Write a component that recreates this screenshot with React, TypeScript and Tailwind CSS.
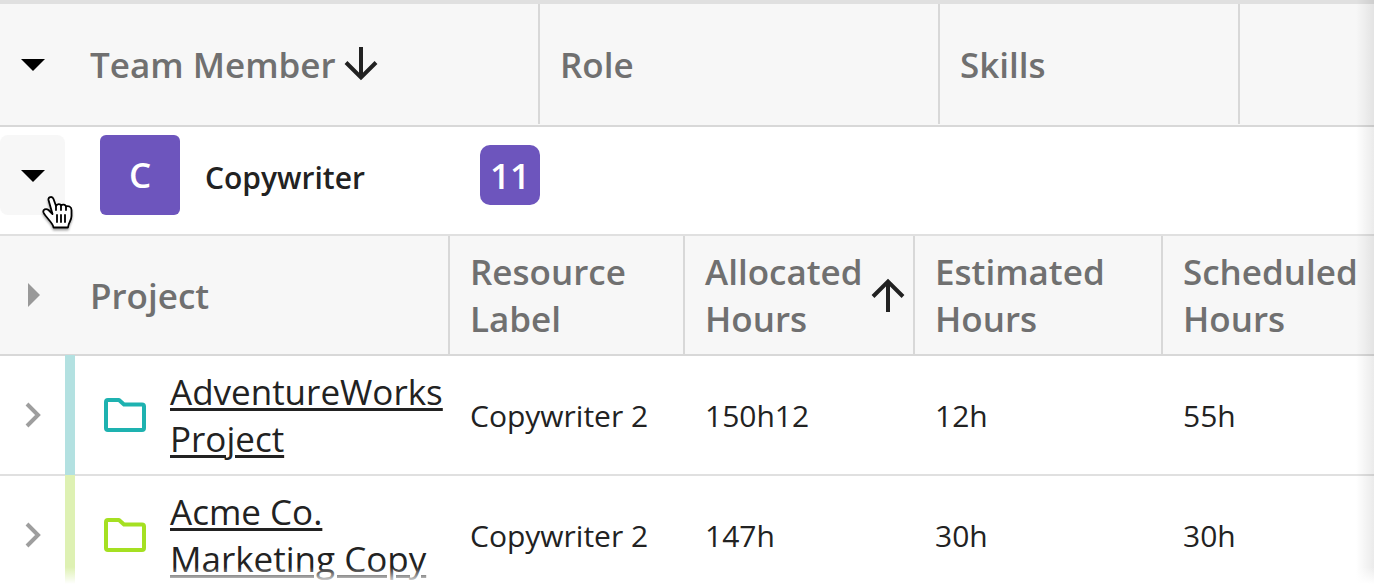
const MEMBER_COLUMNS = [
  { label: "Team Member", sorted: true },
  { label: "Role" },
  { label: "Skills" },
];

const PROJECT_COLUMNS = [
  { label: "Resource Label" },
  { label: "Allocated Hours", sorted: true },
  { label: "Estimated Hours" },
  { label: "Scheduled Hours" },
];

const PROJECTS = [
  {
    name: "AdventureWorks Project",
    stripe: "bg-[#b3e1e1]",
    icon: "text-[#1eb2b0]",
    values: ["Copywriter 2", "150h12", "12h", "55h"],
  },
  {
    name: "Acme Co. Marketing Copy",
    stripe: "bg-[#def1b3]",
    icon: "text-[#a5e022]",
    values: ["Copywriter 2", "147h", "30h", "30h"],
  },
];

function SortArrow({ up = false }: { up?: boolean }) {
  return (
    <svg viewBox="0 0 34 34" className="h-[34px] w-[34px] flex-shrink-0" fill="none" stroke="#222" strokeWidth="4">
      {up ? (
        <path d="M17 34V4M2 18.500L17 3.500L32 18.500" />
      ) : (
        <path d="M17 0V30M2 15.500L17 30.500L32 15.500" />
      )}
    </svg>
  );
}

function CaretDown() {
  return (
    <svg viewBox="0 0 24 12" className="h-3 w-6" fill="#000">
      <path d="M0 0H24L12 12Z" />
    </svg>
  );
}

function CaretRight() {
  return (
    <svg viewBox="0 0 12 24" className="h-6 w-3" fill="#999">
      <path d="M0 0L12 12L0 24Z" />
    </svg>
  );
}

function Chevron() {
  return (
    <svg viewBox="0 0 16 26" className="h-[26px] w-4" fill="none" stroke="#9e9e9e" strokeWidth="4">
      <path d="M2 2L13 13L2 24" />
    </svg>
  );
}

function Folder() {
  return (
    <svg viewBox="0 0 42 34" className="h-[34px] w-[42px]" fill="none" stroke="currentColor" strokeWidth="4" strokeLinejoin="round">
      <path d="M4 2H15L20 6.500H38Q40 6.500 40 8.500V30Q40 32 38 32H4Q2 32 2 30V4Q2 2 4 2Z" />
    </svg>
  );
}

function HandCursor() {
  return (
    <svg viewBox="0 0 32 36" className="pointer-events-none absolute left-[42px] top-[69px] h-9 w-8 drop-shadow-[0_2px_1px_rgba(0,0,0,0.35)]" fill="#fff" stroke="#000" strokeWidth="1.800" strokeLinejoin="round" strokeLinecap="round">
      <path d="M6.500 4C6 .5 10.500 0 11.500 3L14 10C15 7.500 18.500 7.500 19 9.500C20.500 8 23.500 8.500 24 10.500C26 9.500 29.500 10.500 29.500 14V20C29.500 25 26.500 26 26 31.500H11.500C11 26.500 4 22 1.500 16.500C.5 13.500 4 12 6.500 14L10.500 18Z" />
      <path d="M14 10V14M19 9.500V14M24 10.500V14" fill="none" />
      <path d="M15 19V26M19 19V26M23 19V26" fill="none" />
    </svg>
  );
}

export default function App() {
  return (
    <main className="relative h-screen overflow-hidden bg-white font-['Open_Sans',sans-serif] text-[#222]">
      {/* Team members */}
      <table className="w-full table-fixed border-separate border-spacing-0 border-t-4 border-[#e0e0e0]">
        <colgroup>
          <col className="w-[540px]" />
          <col className="w-[400px]" />
          <col className="w-[300px]" />
          <col />
        </colgroup>
        <thead className="bg-[#f7f7f7] text-left text-[35px] text-[#707070]">
          <tr>
            {MEMBER_COLUMNS.map(({ label, sorted }) => (
              <th key={label} className="border-b-2 border-[#d8d8d8] p-0 pb-px font-semibold">
                <div className="flex h-[120px] items-center border-r-2 border-[#d8d8d8] pt-0.5">
                  {sorted && (
                    <button type="button" aria-label="Collapse all" className="flex w-[90px] flex-shrink-0 pl-[21px]">
                      <CaretDown />
                    </button>
                  )}
                  <span className={sorted ? "" : "pl-5"}>{label}</span>
                  {sorted && (
                    <span className="pb-0.5 pl-2">
                      <SortArrow />
                    </span>
                  )}
                </div>
              </th>
            ))}
            <td className="border-b-2 border-[#d8d8d8]" />
          </tr>
        </thead>
        <tbody>
          <tr>
            <td colSpan={4} className="border-b-2 border-[#e0e0e0] p-0">
              <div className="relative flex h-[107px] items-start pt-2">
                <button
                  type="button"
                  aria-label="Collapse Copywriter"
                  className="flex h-20 w-[65px] items-center justify-center rounded-lg bg-[#f7f7f7] pt-0.5"
                >
                  <CaretDown />
                </button>
                <div className="ml-[35px] flex h-20 w-[440px] items-center text-white">
                  <span className="flex h-20 w-20 items-center justify-center rounded-md bg-[#6d55bd] text-[35px] font-semibold">
                    C
                  </span>
                  <span className="flex-1 pl-[25px] pt-1.5 text-3xl font-semibold text-[#222]">Copywriter</span>
                  <span className="flex h-[60px] w-[60px] items-center justify-center rounded-[10px] bg-[#6d55bd] pt-0.5 text-[35px] font-semibold">
                    11
                  </span>
                </div>
                <HandCursor />
              </div>
            </td>
          </tr>
        </tbody>
      </table>

      {/* Projects of the open group */}
      <table className="w-full table-fixed border-separate border-spacing-0">
        <colgroup>
          <col className="w-[450px]" />
          <col className="w-[235px]" />
          <col className="w-[230px]" />
          <col className="w-[248px]" />
          <col />
        </colgroup>
        <thead className="bg-[#f7f7f7] text-left text-[35px] leading-[47px] text-[#707070]">
          <tr>
            <th className="h-[120px] border-r-2 border-b-2 border-[#d8d8d8] p-0 font-semibold">
              <div className="flex items-center">
                <button type="button" aria-label="Expand all" className="flex w-[90px] flex-shrink-0 pl-7">
                  <CaretRight />
                </button>
                Project
              </div>
            </th>
            {PROJECT_COLUMNS.map(({ label, sorted }) => (
              <th
                key={label}
                className="border-r-2 border-b-2 border-[#d8d8d8] p-0 pl-5 font-semibold last:border-r-0"
              >
                <div className="flex items-center justify-between pr-2">
                  <span className="w-min">{label}</span>
                  {sorted && <SortArrow up />}
                </div>
              </th>
            ))}
          </tr>
        </thead>
        <tbody>
          {PROJECTS.map(({ name, stripe, icon, values }) => (
            <tr key={name}>
              <td className="h-[120px] border-b-2 border-[#e0e0e0] p-0">
                <div className="flex h-[118px] items-center">
                  <button type="button" aria-label={`Expand ${name}`} className="flex w-[65px] flex-shrink-0 pl-[25px]">
                    <Chevron />
                  </button>
                  <span className={`h-[120px] w-2.5 flex-shrink-0 ${stripe}`} />
                  <span className={`w-[95px] flex-shrink-0 pl-[29px] ${icon}`}>
                    <Folder />
                  </span>
                  <a
                    href="#"
                    className="text-[35px] leading-[47px] underline decoration-[3px] underline-offset-[3px]"
                  >
                    {name}
                  </a>
                </div>
              </td>
              {values.map((value, i) => (
                <td key={i} className="border-b-2 border-[#e0e0e0] p-0 pt-0.5 pl-5 text-3xl">
                  {value}
                </td>
              ))}
            </tr>
          ))}
        </tbody>
      </table>

      {/* More content to the right and below */}
      <div className="pointer-events-none absolute inset-y-0 right-0 w-[18px] bg-linear-to-r from-transparent to-black/8" />
      <div className="pointer-events-none absolute inset-x-0 bottom-0 h-5 bg-linear-to-b from-transparent to-white to-85%" />
    </main>
  );
}
